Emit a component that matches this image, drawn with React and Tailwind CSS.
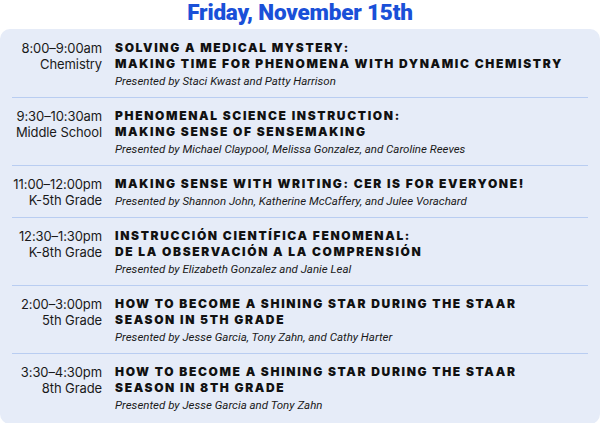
import React from "react";

const sessions = [
  {
    time: "8:00–9:00am",
    group: "Chemistry",
    title: ["Solving a Medical Mystery:", "Making Time for Phenomena with Dynamic Chemistry"],
    by: "Presented by Staci Kwast and Patty Harrison",
  },
  {
    time: "9:30–10:30am",
    group: "Middle School",
    title: ["Phenomenal Science Instruction:", "Making Sense of Sensemaking"],
    by: "Presented by Michael Claypool, Melissa Gonzalez, and Caroline Reeves",
  },
  {
    time: "11:00–12:00pm",
    group: "K-5th Grade",
    title: ["Making Sense with Writing: CER is for Everyone!"],
    by: "Presented by Shannon John, Katherine McCaffery, and Julee Vorachard",
  },
  {
    time: "12:30–1:30pm",
    group: "K-8th Grade",
    title: ["Instrucción Científica Fenomenal:", "De la Observación a la Comprensión"],
    by: "Presented by Elizabeth Gonzalez and Janie Leal",
  },
  {
    time: "2:00–3:00pm",
    group: "5th Grade",
    title: ["How to Become a Shining Star During the STAAR", "Season in 5th Grade"],
    by: "Presented by Jesse Garcia, Tony Zahn, and Cathy Harter",
  },
  {
    time: "3:30–4:30pm",
    group: "8th Grade",
    title: ["How to Become a Shining Star During the STAAR", "Season in 8th Grade"],
    by: "Presented by Jesse Garcia and Tony Zahn",
  },
];

export default function App() {
  return (
    <div className="w-[600px] h-[423px] bg-white overflow-hidden">
      <h1 className="h-[29px] text-center text-[22.5px] leading-[25px] font-black text-[#1a50d8] tracking-[-0.2px] [font-family:Roboto,sans-serif]">
        Friday, November 15th
      </h1>
      <div className="bg-[#e6ecf8] rounded-[10px] pt-px pb-[3px]">
        {sessions.map((s, i) => (
          <div
            key={i}
            className={
              "mx-3 flex pt-[10px] pb-[7px] " +
              (i < sessions.length - 1 ? "border-b border-[#b9cdf1]" : "")
            }
          >
            <div className="w-[90px] shrink-0 text-right text-[13px] leading-[16px] text-[#1a1a1a] [font-family:Inter,sans-serif] tracking-[-0.1px]">
              <div>{s.time}</div>
              <div>{s.group}</div>
            </div>
            <div className="pl-[13px]">
              <div className="uppercase font-black text-[12px] leading-[16px] tracking-[1.65px] text-[#111] [font-family:Inter,sans-serif]">
                {s.title.map((t, j) => (
                  <div key={j}>{t}</div>
                ))}
              </div>
              <div className="italic text-[11.5px] leading-[18px] text-[#1a1a1a] [font-family:Roboto,sans-serif]">
                {s.by}
              </div>
            </div>
          </div>
        ))}
      </div>
    </div>
  );
}
